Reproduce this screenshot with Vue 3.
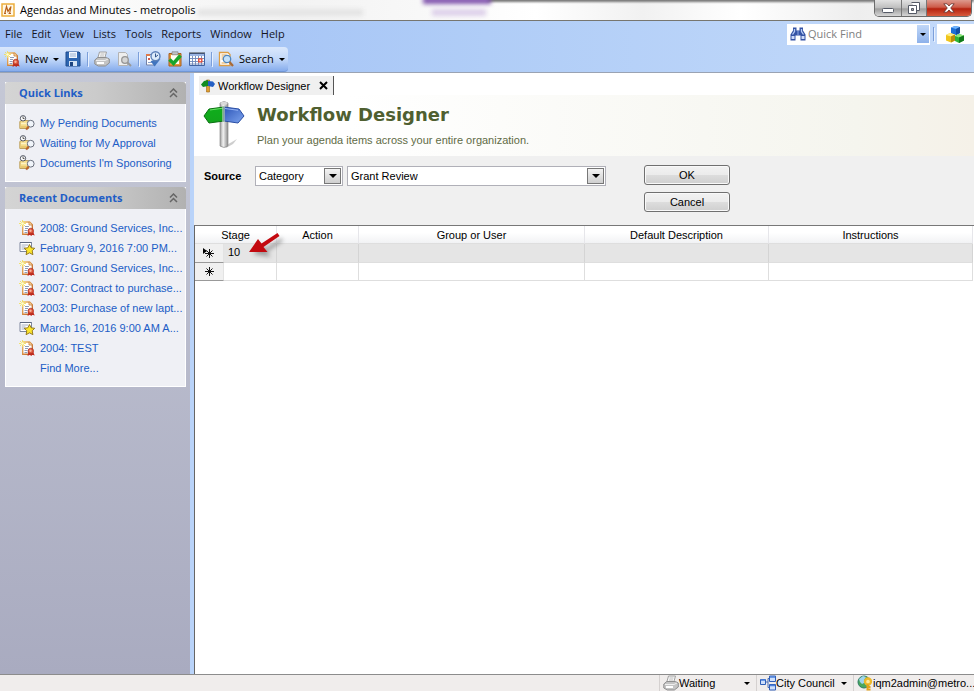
<script setup>
import { ref } from 'vue'

const menus = ['File', 'Edit', 'View', 'Lists', 'Tools', 'Reports', 'Window', 'Help']
const quickLinks = ['My Pending Documents', 'Waiting for My Approval', "Documents I'm Sponsoring"]
const recent = [
  { icon: 'doc', text: '2008: Ground Services, Inc...' },
  { icon: 'meeting', text: 'February 9, 2016 7:00 PM...' },
  { icon: 'doc', text: '1007: Ground Services, Inc...' },
  { icon: 'doc', text: '2007: Contract to purchase...' },
  { icon: 'doc', text: '2003: Purchase of new lapt...' },
  { icon: 'meeting', text: 'March 16, 2016 9:00 AM A...' },
  { icon: 'doc', text: '2004: TEST' },
  { icon: '', text: 'Find More...' }
]
const source = ref('Category')
const category = ref('Grant Review')
const quickFind = ref('')
</script>

<template>
  <svg class="defs" width="0" height="0" aria-hidden="true">
    <defs>
      <linearGradient id="gGreen" x1="0" y1="0" x2="0" y2="1"><stop offset="0" stop-color="#0fae1c" /><stop offset="1" stop-color="#12a41c" /></linearGradient>
      <linearGradient id="gBlue" x1="0" y1="0" x2="1" y2="1"><stop offset="0" stop-color="#2d55b8" /><stop offset="1" stop-color="#7da4ee" /></linearGradient>
      <linearGradient id="gPole" x1="0" y1="0" x2="1" y2="0"><stop offset="0" stop-color="#9a9a9a" /><stop offset=".4" stop-color="#f2f2f2" /><stop offset="1" stop-color="#8b8b8b" /></linearGradient>
      <linearGradient id="gPage" x1="0" y1="0" x2="1" y2="1"><stop offset="0" stop-color="#f6c56a" /><stop offset="1" stop-color="#b3541f" /></linearGradient>
      <symbol id="doc" viewBox="0 0 16 16">
        <path d="M3.700 2h6.800l2.800 2.800v9.500h-9.600z" fill="#fff" stroke="url(#gPage)" stroke-width="1.400" />
        <path d="M10 2v3h3" fill="#fbe3b5" stroke="#c4762f" stroke-width=".8" />
        <path d="M6 6.500h4M6 8.500h3M5.500 10.500h3M5.500 12.500h3" stroke="#8f9cb8" />
        <path d="M3.500 0v7M0 3.500h7M1 1l5 5M6 1l-5 5" stroke="#f0e060" stroke-width=".9" /><circle cx="3.500" cy="3.500" r="1.300" fill="#fffbd0" />
        <path d="M9.500 12l-1 4 2.300-1.300 1.500 1.300 1-1.300 2.400.8-1.700-4z" fill="#c2281c" />
        <circle cx="11.800" cy="11" r="2.800" fill="#dc5238" stroke="#a3281b" stroke-width=".6" /><circle cx="11.500" cy="10.700" r="1.200" fill="#f6b09a" />
      </symbol>
      <symbol id="meeting" viewBox="0 0 16 16">
        <path d="M1 2.500h11.500v9h-11.500z" fill="#fff" stroke="#7d879d" /><path d="M2.500 5h7M2.500 7h4M2.500 9h4" stroke="#a4aec0" /><path d="M1 2.500h11.500" stroke="#5f6a80" />
        <path d="M10.500 4.500l1.700 3.300 3.500.5-2.500 2.500.7 3.900-3.400-1.900-3.400 1.900.7-3.900-2.600-2.500 3.600-.5z" fill="#fbe52c" stroke="#8c6f14" stroke-width=".9" />
      </symbol>
      <symbol id="pending" viewBox="0 0 16 16">
        <path d="M.8 6.500l2-1h7v8h-9z" fill="#f5dc8a" stroke="#b89a55" stroke-width=".9" /><path d="M2 8.500h6" stroke="#fff4c4" stroke-width="1.500" /><path d="M2 12h6" stroke="#dcb654" />
        <circle cx="4" cy="3.300" r="2.700" fill="#fff" stroke="#454b59" stroke-width=".9" /><path d="M4 1.500v2h1.500" stroke="#333" fill="none" stroke-width=".8" />
        <circle cx="11.700" cy="8.700" r="3.400" fill="#f1f5fa" stroke="#6b717d" /><path d="M9.600 11.400l-2.400 3.200" stroke="#b9652c" stroke-width="2" />
      </symbol>
      <symbol id="save" viewBox="0 0 16 16">
        <path d="M1 1h13l1 1v13h-14z" fill="#2e66b1" stroke="#1d4b8e" /><path d="M4 1h8v6h-8z" fill="#f1f6fd" /><path d="M5 3h6M5 5h6" stroke="#9ab2d2" /><path d="M4 10h8v5h-8z" fill="#d5e3f4" /><path d="M5 11h3v4h-3z" fill="#1d4480" />
      </symbol>
      <symbol id="printer" viewBox="0 0 16 16">
        <path d="M5.500 1h7l-2 7h-7z" fill="#f7f7f7" stroke="#a0a0a0" /><path d="M6.500 3h4M6 5h4" stroke="#bdbdbd" /><path d="M.8 9l3-2.500h8.500l3 1.500v4l-4 3h-7l-3.500-2z" fill="#c4c4c4" stroke="#8f8f8f" /><path d="M2 9.500h9l3-1.500" stroke="#efefef" fill="none" /><path d="M3 12h7" stroke="#fff" stroke-width="2" />
      </symbol>
      <symbol id="preview" viewBox="0 0 16 16">
        <path d="M2.500 1.500h7l2 2v11h-9z" fill="#eeeeee" stroke="#b3b3b3" /><circle cx="9" cy="9" r="3.300" fill="#d5d5d5" stroke="#959595" stroke-width="1.300" /><path d="M11.500 11.500l3.500 3.500" stroke="#999" stroke-width="2" />
      </symbol>
      <symbol id="history" viewBox="0 0 16 16">
        <path d="M1.500 3.500h9v10.500h-9z" fill="#fff" stroke="#7481a5" /><path d="M1 3h4v2h-4z" fill="#e07a4a" /><path d="M3 7h2v2h-2z" fill="#d25b4b" /><path d="M3 11.500h4" stroke="#8ca0ca" /><path d="M5.500 10l4 5.500 6-7.500z" fill="#3f74bf" /><circle cx="10.500" cy="5.200" r="4.500" fill="#dcebfa" stroke="#5c80b8" stroke-width="1.400" /><path d="M10.500 2.500v3.500l2.500-2" fill="none" stroke="#34568c" />
      </symbol>
      <symbol id="approve" viewBox="0 0 16 16">
        <path d="M2 2.500h12v12.500h-12z" fill="#e79b3c" stroke="#a85f1d" /><path d="M4 4h8v9h-8z" fill="#fffdf5" /><path d="M5 .8h6v3h-6z" fill="#bfc3c9" stroke="#777" stroke-width=".6" /><path d="M2.500 8.500l4 4 7-8" fill="none" stroke="#18a52a" stroke-width="3.500" />
      </symbol>
      <symbol id="calendar" viewBox="0 0 16 16">
        <path d="M.5 2.500h15v12h-15z" fill="#fff" stroke="#4063a2" /><path d="M1 3h14v2h-14z" fill="#9ab4e3" /><path d="M1 1v2M3 1v2M5 1v2M7 1v2M9 1v2M11 1v2M13 1v2M15 1v2" stroke="#444" /><path d="M1 7.500h14M1 10.500h14M1 13h14M3.500 5v9M6.500 5v9M9.500 5v9M12.500 5v9" stroke="#6d87b9" stroke-width=".9" /><path d="M9.800 7.800h3v3h-3z" fill="#fff" stroke="#e8442d" stroke-width="1.300" />
      </symbol>
      <symbol id="find" viewBox="0 0 16 16">
        <path d="M1.500 1.500h8.500l2 2v11h-10.500z" fill="#fff" stroke="#dd9d42" stroke-width="1.300" /><path d="M3.500 4h5M3.500 6h2M3.500 8h2M3.500 12h5" stroke="#e1a34a" /><circle cx="9" cy="8" r="3.700" fill="#c5e2fa" stroke="#4f86be" stroke-width="1.300" /><path d="M11.500 11l3.500 4" stroke="#a96a37" stroke-width="2.200" />
      </symbol>
      <symbol id="binoculars" viewBox="0 0 16 16">
        <path d="M3 1.500h3.500v3h3v-3h3.500v3l2.500 4v6h-5v-5h-5v5h-5v-6l2.500-4z" fill="#3553a5" /><path d="M4.500 3v2.500l-2 3M11.500 3v2.500l2 3" stroke="#b8cdf5" fill="none" stroke-width="1.300" /><path d="M1.500 11.500h3M11.500 11.500h3" stroke="#cfdcfa" stroke-width="3" /><path d="M8 5v4" stroke="#8faae6" />
      </symbol>
      <symbol id="cubes" viewBox="0 0 18 18">
        <path d="M5 2.500l4-1.500 5 1v6l-4 2-5-1.500z" fill="#1c6fd6" /><path d="M5 2.500l4-1.500 5 1-4 2z" fill="#6fb4ff" /><path d="M10 4l4-2v6l-4 2z" fill="#1250a4" />
        <path d="M0 10l4-2 5 1.500v6l-4 2-5-2z" fill="#f0c51c" /><path d="M0 10l4-2 5 1.500-4 2z" fill="#ffef87" /><path d="M5 11.500l4-2v6l-4 2z" fill="#b98d0c" />
        <path d="M9 11l4-2 5 1.500v5l-5 2.500-4-2z" fill="#2fb536" /><path d="M9 11l4-2 5 1.500-5 2z" fill="#90e77e" /><path d="M13 12.500l5-2v5l-5 2.500z" fill="#127a1b" />
      </symbol>
      <symbol id="signpost" viewBox="0 0 42 48">
        <path d="M22 45l12-7-4 5-7 4z" fill="#b9b9b9" opacity=".7" />
        <path d="M17 2q4-3 8 0v43q-4 3-8 0z" fill="url(#gPole)" stroke="#8d8d8d" stroke-width=".7" /><ellipse cx="21" cy="2.300" rx="3.500" ry="1.500" fill="#dadada" />
        <path d="M6 8l15-2v14l-15 2-5-7z" fill="url(#gGreen)" stroke="#0a7011" /><path d="M7 9l13-1.800" stroke="#6de069" />
        <path d="M21 6l15 2 5 7-6 7-14-2z" fill="url(#gBlue)" stroke="#2a4ea4" /><path d="M22 7.500l13 1.800" stroke="#96b5f5" />
        <path d="M19 5h3v16h-3z" fill="#b7c9ba" opacity=".65" />
      </symbol>
      <symbol id="signsmall" viewBox="0 0 14 14">
        <path d="M5.500 1h3v12h-3z" fill="#e0a030" stroke="#9a6314" stroke-width=".6" /><path d="M3 2l4-1v6l-5 1-2-2.500z" fill="#118c21" /><path d="M7 2l5 .5 2 2.500-2 3-5-1z" fill="#245fc4" />
      </symbol>
      <symbol id="network" viewBox="0 0 16 16">
        <path d="M5 7h3M8 3.500v9M8 3.500h2M8 12.500h2" stroke="#4a6fb7" fill="none" /><path d="M.5 4.500h5v5h-5zM9.500 1h6v5.500h-6zM9.500 9.500h6v5.500h-6z" fill="#cfe0fb" stroke="#2f5fb8" /><path d="M1 5h4M10 2h5M10 10.500h5" stroke="#4b80dc" stroke-width="1.500" />
      </symbol>
      <symbol id="globe" viewBox="0 0 16 16">
        <circle cx="7" cy="7" r="6" fill="#4aa75b" stroke="#2d7c64" /><path d="M2 4l4-3 3 1-2 3 2 2-4 2-2-2z" fill="#9fd4ef" /><circle cx="11" cy="6.500" r="3" fill="#fbeaa0" stroke="#edb92a" stroke-width="2.300" /><path d="M10.500 9v6.500M10.500 12h3M10.500 14.500h3" stroke="#e2a31b" stroke-width="2" />
      </symbol>
    </defs>
  </svg>

  <div class="window">
    <header class="titlebar">
      <span class="glass" aria-hidden="true"><i class="purple"></i><i class="smudge"></i><i class="smudge two"></i></span>
      <svg class="app-icon" viewBox="0 0 14 14" aria-hidden="true"><path d="M1 1h12v12H1z" fill="#fff8e6" stroke="#edae3e" stroke-width="1.500" /><path d="M3 10.500h2M3.800 10.500l1.700-7 1.500 5 3-5-1.400 7M7.500 10.500h2.500" fill="none" stroke="#b8601a" stroke-width="1.200" /></svg>
      <span class="title">Agendas and Minutes - metropolis</span>
      <div class="controls">
        <button class="ctl min" aria-label="Minimize"><svg width="12" height="5"><rect x=".5" y=".5" width="11" height="4" rx="1" fill="#fff" stroke="#555a66" /></svg></button>
        <button class="ctl restore" aria-label="Restore"><svg width="12" height="12"><path d="M3.500 .5h8v8h-2.500M.5 3.500h8v8h-8z" fill="#fff" stroke="#555a66" /><path d="M3.500 6.500h2v2h-2z" fill="#aaa" stroke="#555a66" /></svg></button>
        <button class="ctl close" aria-label="Close"><svg width="12" height="10"><path d="M.8 .8h3.200l2 2.200 2-2.200h3.200l-3.500 4.200 3.500 4.200h-3.200l-2-2.200-2 2.200h-3.200l3.500-4.200z" fill="#fff" stroke="#63302c" stroke-width=".8" /></svg></button>
      </div>
    </header>

    <div class="bars">
      <div class="menurow">
        <nav class="menus"><button v-for="m in menus" :key="m">{{ m }}</button></nav>
        <div class="finder">
          <svg class="ic" aria-hidden="true"><use href="#binoculars" /></svg>
          <input v-model="quickFind" type="text" placeholder="Quick Find" aria-label="Quick Find">
          <button aria-label="Quick Find options"><i class="caret"></i></button>
        </div>
        <i class="sep"></i>
        <button class="cubes" aria-label="Modules"><svg width="18" height="18"><use href="#cubes" /></svg></button>
      </div>
      <div class="toolbar">
        <button class="tool"><svg class="ic"><use href="#doc" /></svg><span class="word">New</span><i class="caret"></i></button>
        <button class="tool" aria-label="Save"><svg class="ic"><use href="#save" /></svg></button>
        <i class="sep"></i>
        <button class="tool" aria-label="Print"><svg class="ic"><use href="#printer" /></svg></button>
        <button class="tool" aria-label="Print preview"><svg class="ic"><use href="#preview" /></svg></button>
        <i class="sep"></i>
        <button class="tool" aria-label="History"><svg class="ic"><use href="#history" /></svg></button>
        <button class="tool" aria-label="Approve"><svg class="ic"><use href="#approve" /></svg></button>
        <button class="tool" aria-label="Calendar"><svg class="ic"><use href="#calendar" /></svg></button>
        <i class="sep"></i>
        <button class="tool"><svg class="ic"><use href="#find" /></svg><span class="word">Search</span><i class="caret"></i></button>
      </div>
    </div>

    <div class="body">
      <aside class="sidebar">
        <section class="panel">
          <h2>Quick Links <svg width="9" height="10" aria-hidden="true"><path d="M1 4.500l3.500-3.500 3.500 3.500M1 9l3.500-3.500 3.500 3.500" fill="none" stroke="#666" stroke-width="1.500" /></svg></h2>
          <ul><li v-for="l in quickLinks" :key="l"><svg class="ic" aria-hidden="true"><use href="#pending" /></svg><a href="#">{{ l }}</a></li></ul>
        </section>
        <section class="panel">
          <h2>Recent Documents <svg width="9" height="10" aria-hidden="true"><path d="M1 4.500l3.500-3.500 3.500 3.500M1 9l3.500-3.500 3.500 3.500" fill="none" stroke="#666" stroke-width="1.500" /></svg></h2>
          <ul><li v-for="r in recent" :key="r.text"><svg class="ic" aria-hidden="true"><use v-if="r.icon" :href="'#' + r.icon" /></svg><a href="#">{{ r.text }}</a></li></ul>
        </section>
      </aside>

      <main class="main">
        <div class="tabs">
          <div class="tab"><svg width="14" height="14" aria-hidden="true"><use href="#signsmall" /></svg><span>Workflow Designer</span><button aria-label="Close tab"><svg width="9" height="9"><path d="M1 1l7 7M8 1l-7 7" stroke="#000" stroke-width="2" /></svg></button></div>
        </div>
        <div class="banner">
          <svg width="42" height="48" aria-hidden="true"><use href="#signpost" /></svg>
          <div><h1>Workflow Designer</h1><p>Plan your agenda items across your entire organization.</p></div>
        </div>
        <form class="form" @submit.prevent>
          <div class="fields">
            <label for="source">Source</label>
            <span class="combo short"><select id="source" v-model="source"><option>Category</option></select><i><b class="caret"></b></i></span>
            <span class="combo long"><select v-model="category" aria-label="Category"><option>Grant Review</option></select><i><b class="caret"></b></i></span>
          </div>
          <div class="actions"><button type="submit">OK</button><button type="button">Cancel</button></div>
        </form>
        <div class="gridwrap">
          <table>
            <colgroup><col class="c0"><col class="c1"><col class="c2"><col class="c3"><col class="c4"><col></colgroup>
            <thead><tr><th colspan="2">Stage</th><th>Action</th><th>Group or User</th><th>Default Description</th><th>Instructions</th></tr></thead>
            <tbody>
              <tr class="current">
                <th scope="row"><svg width="13" height="13" aria-label="Current new row"><path d="M0 1l4 3-4 3z" fill="#000" /><path d="M6.500 2v9M2 6.500h9M3.500 3.500l6 6M9.500 3.500l-6 6" stroke="#111" /></svg></th>
                <td class="stage">10
                  <svg class="arrow" width="38" height="32" aria-hidden="true"><path class="shade" d="M5 22l9-9 3 4 16-11 2 3-16 11 4 5z" /><path d="M1 20l9-13 3.500 4.500 16-10.500 2 3-16 11 4 5z" fill="#c3090f" /></svg>
                </td><td></td><td></td><td></td><td></td>
              </tr>
              <tr>
                <th scope="row"><svg width="13" height="13" aria-label="New row"><path d="M6.500 2v9M2 6.500h9M3.500 3.500l6 6M9.500 3.500l-6 6" stroke="#111" /></svg></th>
                <td></td><td></td><td></td><td></td><td></td>
              </tr>
            </tbody>
          </table>
        </div>
      </main>
    </div>

    <footer class="status">
      <button class="s1"><svg class="ic"><use href="#printer" /></svg><span>Waiting</span><i class="caret"></i></button>
      <button class="s2"><svg class="ic"><use href="#network" /></svg><span>City Council</span><i class="caret"></i></button>
      <button class="s3"><svg class="ic"><use href="#globe" /></svg><span>iqm2admin@metro...</span></button>
    </footer>
  </div>
</template>

<style>
body { margin: 0; }
</style>

<style scoped>
* { box-sizing: border-box; }
button { border: 0; background: none; padding: 0; margin: 0; font: inherit; color: inherit; }
h1, h2, p, ul { margin: 0; padding: 0; }
svg { display: block; flex: none; }
.defs { position: absolute; }
.ic { width: 16px; height: 16px; }
.window { display: flex; flex-direction: column; height: 100vh; overflow: hidden; background: #fff; color: #000; font: 11px/16px "Liberation Sans", Arial, sans-serif; }
.caret { display: block; flex: none; width: 0; height: 0; border: 3px solid transparent; border-top-color: #000; border-bottom: 0; }

.titlebar { position: relative; display: flex; align-items: center; gap: 5px; flex: none; height: 21px; padding-left: 1px; border-bottom: 1px solid #77766f; background: linear-gradient(90deg, #fff, #f3f3f3 30%, #f8f8f8 43%, #fff 55%, #f1f1f1 66%, #fff 76%, #eee 88%, #f7f7f7); }
.app-icon { position: relative; width: 14px; height: 14px; }
.title { position: relative; flex: 1; font: 11px/18px "Open Sans", "Noto Sans", sans-serif; }
.glass { position: absolute; inset: 0; overflow: hidden; }
.glass i { position: absolute; display: block; filter: blur(2px); }
.glass::before { content: ""; position: absolute; left: 50%; right: 0; top: -3px; height: 5px; background: #777; filter: blur(1px); }
.purple { left: 423px; top: -3px; width: 68px; height: 7px; background: #8357ae; }
.smudge { left: 432px; top: 9px; width: 54px; height: 7px; background: #ded1ea; }
.smudge.two { left: 198px; width: 165px; background: #e4e4e4; }
.controls { position: relative; align-self: flex-start; display: flex; margin-right: 2px; border: 1px solid #6b6b6b; border-top: 0; border-radius: 0 0 5px 5px; overflow: hidden; }
.ctl { display: flex; align-items: center; justify-content: center; height: 16px; background: linear-gradient(#e2e2e2, #bdbdbd 50%, #9d9d9d 55%, #d6d6d6); border-right: 1px solid #777; }
.min { width: 27px; padding-top: 4px; }
.restore { width: 25px; }
.close { width: 44px; border-right: 0; background: linear-gradient(#dd9a8e, #cd5b49 45%, #b5220f 55%, #d85a3c); }

.bars { flex: none; background: linear-gradient(90deg, #9ebef5, #b0cdf7 50%, #c4dafa); border-bottom: 1px solid #9aa3b3; font: 11px/16px "Open Sans", "Noto Sans", sans-serif; }
.menurow { display: flex; align-items: center; height: 26px; }
.menus { display: flex; gap: 9px; flex: 1; padding-left: 5px; color: #15151f; }
.finder { display: flex; align-items: center; width: 143px; height: 21px; padding: 1px 1px 1px 3px; background: #fff; }
.finder input { flex: 1; min-width: 0; width: 0; border: 0; padding: 0 0 0 2px; background: none; font: inherit; outline: 0; }
.finder input::placeholder { color: #808080; opacity: 1; }
.finder button { display: flex; align-items: center; justify-content: center; width: 12px; height: 18px; background: linear-gradient(#c0d7f8, #8db1ea); }
.sep { flex: none; width: 1px; height: 14px; background: #7c9fda; box-shadow: 1px 1px 0 #e7f0fe; }
.menurow .sep { margin: 0 3px; }
.cubes { display: flex; align-items: center; width: 37px; height: 20px; padding-left: 9px; background: #fff; }
.toolbar { display: inline-flex; align-items: center; gap: 6px; height: 25px; padding: 0 3px 0 4px; border-radius: 0 4px 4px 0; border-bottom: 1px solid #6f96d6; background: linear-gradient(#dbe8fc, #c2d8f9 50%, #86acec); vertical-align: top; }
.tool { display: flex; align-items: center; gap: 5px; }

.body { display: flex; flex: 1; min-height: 0; }
.sidebar { flex: none; width: 190px; padding: 9px 4px 0 5px; background: linear-gradient(#c5c8d6, #a9abc0); }
.panel { margin-bottom: 5px; border: 1px solid #fff; border-top: 0; background: #eff0f5; }
.panel h2 { display: flex; align-items: center; justify-content: space-between; height: 22px; margin: 0 -1px; padding: 0 8px 0 14px; border-radius: 3px 3px 0 0; background: linear-gradient(90deg, #d4d4d4, #cbcbcb 50%, #b1b1b1); color: #215dc6; font: bold 11px/16px "Open Sans", "Noto Sans", sans-serif; }
.panel ul { list-style: none; padding: 9px 0 8px 13px; }
.panel li { display: flex; align-items: center; gap: 5px; height: 20px; white-space: nowrap; }
.panel a { color: #215dc6; text-decoration: none; }

.main { display: flex; flex-direction: column; flex: 1; min-width: 0; border-left: 4px solid #b9d3f9; background: #fff; }
.tabs { display: flex; height: 22px; padding: 3px 0 0 5px; }
.tab { display: flex; align-items: center; gap: 3px; padding: 0 5px 0 2px; border-right: 1px solid #555; background: #f0f0f0; white-space: nowrap; }
.tab button { margin-left: 6px; }
.banner { display: flex; gap: 12px; height: 61px; padding: 6px 0 0 9px; background: linear-gradient(90deg, #fff 20%, #f5f5ee 85%, #f5f1e8); }
.banner h1 { color: #4f5f30; font: bold 18px/28px "DejaVu Sans", Verdana, sans-serif; }
.banner p { margin-top: 3px; color: #5f6b45; }
.form { display: flex; align-items: flex-start; gap: 38px; height: 69px; padding: 9px 9px 0 10px; background: #f0f0f0; }
.fields { display: flex; gap: 4px; padding-top: 1px; }
.form label { width: 47px; font-weight: bold; line-height: 20px; }
.combo { position: relative; display: block; height: 20px; border: 1px solid #b0b0b8; background: #fff; }
.combo.short { width: 88px; }
.combo.long { width: 259px; }
.combo select { width: 100%; height: 18px; padding: 0 20px 0 3px; border: 0; appearance: none; background: none; color: #000; font: inherit; outline: 0; }
.combo i { position: absolute; right: 1px; top: 1px; width: 17px; height: 16px; border: 1px solid #777; background: linear-gradient(#f3f3f3, #cfcfcf); display: flex; align-items: center; justify-content: center; pointer-events: none; }
.combo .caret { border-width: 4px 4px 0; }
.actions { display: grid; gap: 7px; width: 86px; }
.actions button { height: 20px; border: 1px solid #707070; border-radius: 3px; background: linear-gradient(#f2f2f2, #ebebeb 50%, #ddd 50%, #cfcfcf); box-shadow: inset 0 0 0 1px #f9f9f9; }

.gridwrap { flex: 1; border-top: 1px solid #777; border-left: 1px solid #666; padding-right: 1px; }
table { width: 100%; border-collapse: separate; border-spacing: 0; table-layout: fixed; }
.c0 { width: 29px; } .c1 { width: 53px; } .c2 { width: 82px; } .c3 { width: 226px; } .c4 { width: 184px; }
th, td { height: 18px; padding: 0; border-right: 1px solid #dedede; border-bottom: 1px solid #dedede; font-weight: normal; line-height: 14px; }
thead th { background: linear-gradient(#fff 40%, #f1f2f4); border-right-color: #e6e6ea; }
tbody th { background: #f0f0f0; border-bottom-color: #999; border-right-color: #e3e3e3; padding-left: 8px; }
tbody th svg { overflow: visible; }
.current td { height: 19px; background: #e5e5e5; border-right-color: #d4d4d4; }
.stage { position: relative; padding: 0 0 3px 4px; }
.arrow { position: absolute; left: 24px; top: -12px; overflow: visible; }
.shade { fill: #555; opacity: .5; filter: blur(2px); }

.status { display: flex; justify-content: flex-end; align-items: center; flex: none; height: 17px; border-top: 1px solid #8c8c8c; background: #f0edec; }
.status button { display: flex; align-items: center; height: 16px; border-left: 1px solid #d5d1d0; padding-left: 3px; white-space: nowrap; }
.status .caret { margin: 0 6px 0 auto; }
.s1 { width: 97px; }
.s2 { width: 97px; }
.s3 { width: 121px; }
</style>
